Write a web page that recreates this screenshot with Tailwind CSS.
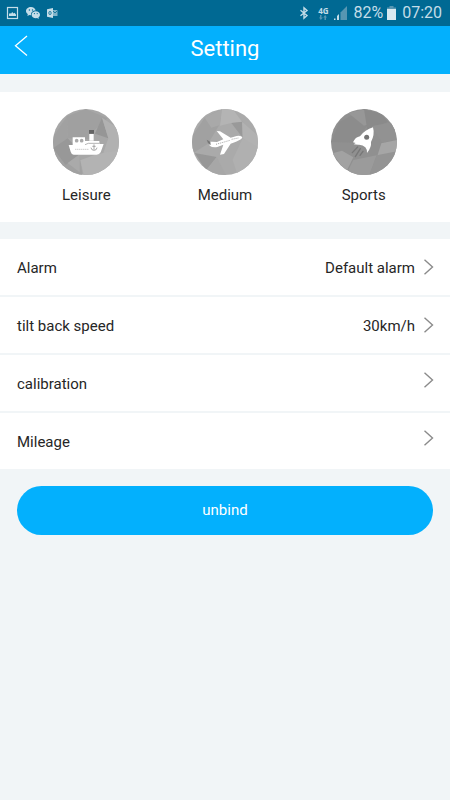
<!DOCTYPE html>
<html lang="en">
<head>
<meta charset="utf-8">
<meta name="viewport" content="width=device-width, initial-scale=1">
<title>Setting</title>
<script src="https://cdn.jsdelivr.net/npm/@tailwindcss/browser@4"></script>
</head>
<body class="min-h-screen bg-[#f1f5f7] font-['Roboto','Liberation_Sans',sans-serif] text-[15px] text-[#262626]">
<div class="flex h-[26px] items-center justify-between bg-[#006993] pr-2 pl-1.5 text-[#c4dde8]">
  <div class="flex items-center gap-[7px]">
    <svg class="h-[14px] w-[13px]" viewBox="0 0 13 14" fill="none" aria-hidden="true"><rect x="1.5" y="1.5" width="10" height="11" stroke="currentColor" stroke-width="1.2"/><path d="M3 10V8l1-1 1 .7L6.200 6l1.300 1.400L8.500 6.800 10 8.500V10z" fill="currentColor"/></svg>
    <svg class="h-[14px] w-[14px]" viewBox="0 0 14 14" aria-hidden="true"><path d="M5 1C2.200 1 0 2.800 0 5c0 1.300.7 2.400 1.800 3.100L1.400 10l2-1 1.600.2C4.700 6.500 7 4.500 9.700 4.600 9.300 2.500 7.400 1 5 1z" fill="currentColor"/><path d="M9.800 5.200C7.500 5.200 5.600 6.700 5.600 8.700s1.900 3.500 4.200 3.500l1.300-.2 1.700 1-.4-1.600c1-.7 1.600-1.600 1.600-2.700 0-2-1.900-3.500-4.200-3.500z" fill="currentColor"/><g fill="#006993"><circle cx="3.400" cy="4" r=".7"/><circle cx="6.500" cy="4" r=".7"/><circle cx="8.400" cy="7.600" r=".6"/><circle cx="11.200" cy="7.600" r=".6"/></g></svg>
    <svg class="h-[12px] w-[11px]" viewBox="0 0 11 12" fill="none" aria-hidden="true"><path d="M0 2.200 6 1v10L0 9.800z" fill="currentColor"/><path d="M6 3h4.500v6H6z" fill="currentColor" opacity=".65"/><path d="M6 4l2 2 2.500-2.500" stroke="#006993" stroke-width=".8"/><ellipse cx="3" cy="6" rx="1.200" ry="1.600" stroke="#006993" stroke-width=".8"/></svg>
  </div>
  <div class="flex items-center">
    <svg class="mr-2 h-[14px] w-[10px]" viewBox="0 0 10 14" fill="none" stroke="currentColor" stroke-width="1.400" aria-hidden="true"><path d="M1.500 4.200 8 9.500 5 12.200V1.800l3 2.700-6.500 5.300"/></svg>
    <div class="mr-1 flex w-3 flex-col items-center">
      <span class="font-['Noto_Sans'] text-[8px] leading-[8px] font-bold">4G</span>
      <svg class="h-[5px] w-2" viewBox="0 0 8 5" fill="#5796b2" aria-hidden="true"><path d="M1 0h1.500v2.500H4L1.800 5 0 2.500h1zM5.500 5V2.500H4.200L6.200 0 8 2.500H7V5z"/></svg>
    </div>
    <svg class="mr-1.5 h-[14px] w-[14px]" viewBox="0 0 14 14" aria-hidden="true"><path d="M7.500 6.500 14 0v14H7.500z" fill="#5796b2"/><path d="M1 12.500h1.500V14H1zM4 10l2-2v6H4z" fill="#c4dde8"/></svg>
    <span class="mr-1 text-base leading-6">82%</span>
    <svg class="mr-1.5 h-[14px] w-[9px]" viewBox="0 0 9 14" aria-hidden="true"><path d="M2.500 0h4v1.500H9V4H0V1.500h2.500z" fill="#5796b2"/><path d="M0 3h9v11H0z" fill="#d9e9f0"/></svg>
    <span class="text-base leading-6">07:20</span>
  </div>
</div>
<header class="relative h-12 bg-[#03b0fd] text-white">
  <button type="button" aria-label="Back" class="absolute top-2 left-3 h-6 w-5"><svg class="h-6 w-5" viewBox="0 0 20 24" fill="none" stroke="currentColor" stroke-width="1.300" aria-hidden="true"><path d="M15 2 3.500 11.800 15 21.500"/></svg></button>
  <h1 class="h-[34px] overflow-hidden pt-2.5 text-center text-[22px] leading-[26px]">Setting</h1>
</header>
<main class="pt-[18px]">
  <section aria-label="Riding mode" class="grid grid-cols-3 bg-white px-[17px] pt-[17px] pb-[15px]">
    <button type="button" class="flex flex-col items-center gap-2">
      <svg class="size-[66px] rounded-full" viewBox="40 28 198 198" aria-hidden="true"><path d="M40 28h198v198H40z" fill="#a7a7a7"/><path d="M82 50 138 28 204 56 164 92 150 118 84 116z" fill="#a0a0a0"/><path d="M82 50 40 112v114h88l-8-60-42 28 6-78z" fill="#a1a1a1"/><path d="M84 116 40 146l38 50 48-36z" fill="#989898"/><path d="M187 54 166 102 206 116z" fill="#969696"/><path d="M187 54 238 88v68l-50 12 18-52z" fill="#b1b1b1"/><path d="M122 182 170 164l68-12v74H132z" fill="#b3b3b3"/><path d="M84 190 120 164v54z" fill="#aaa"/><path d="M148 91h15v11h-15z" fill="#656565"/><path d="M149 103h13v20h-13zM99 113h37v11h43v9h13l-9 25q-4 7-12 7h-69q-7-1-9-9l-6-20h12z" fill="#fff"/><g fill="#aaa"><circle cx="111" cy="123" r="5.500"/><circle cx="126" cy="123" r="5.500"/></g><path d="M136 135l10-4h32" fill="none" stroke="#a6a6a6" stroke-width="2.500"/><path d="M107 149h40" fill="none" stroke="#a6a6a6" stroke-width="2.500" stroke-dasharray="3 3"/><path d="M163 134v16m-5-10h10m-14 4q1 8 9 8t9-8" fill="none" stroke="#999" stroke-width="2.500"/></svg>
      <span class="leading-6">Leisure</span>
    </button>
    <button type="button" class="flex flex-col items-center gap-2">
      <svg class="size-[66px] rounded-full" viewBox="36 28 198 198" aria-hidden="true"><path d="M36 28h198v198H36z" fill="#aaa"/><path d="M36 110 74 54l52-26-6 44-36 60-48 30z" fill="#a1a1a1"/><path d="M74 54 126 28 120 76 94 84z" fill="#a9a9a9"/><path d="M126 28h32l28 38-32 4-34 8z" fill="#b4b4b4"/><path d="M154 70 188 66v48z" fill="#999"/><path d="M186 66 234 108v48l-46-42z" fill="#b2b2b2"/><path d="M44 160 110 172 78 212z" fill="#979797"/><path d="M110 172 138 226H70z" fill="#a7a7a7"/><path d="M188 116 234 142v54l-62 28-14-44z" fill="#b0b0b0"/><path d="M88 126h9l14 1 19-8-20-25 10 1 32 19 18-5q14-2 17 4-2 7-19 13l-16 6-20 31-12 2 10-30-18 7q-14 3-23-4z" fill="#fff"/><path d="M80 120 91 126 92 137 84 130z" fill="#777"/><path d="M108 134 150 122M155 119l20-4" stroke="#909090" stroke-width="2.500" stroke-dasharray="3 3"/></svg>
      <span class="leading-6">Medium</span>
    </button>
    <button type="button" class="flex flex-col items-center gap-2">
      <svg class="size-[66px] rounded-full" viewBox="37 27 198 198" aria-hidden="true"><path d="M37 27h198v198H37z" fill="#909090"/><path d="M37 126 62 66l74-39 18 38-46 63z" fill="#8c8c8c"/><path d="M88 38 146 27l28 38-38 12z" fill="#979797"/><path d="M136 27 188 42 208 66 146 90z" fill="#8a8a8a"/><path d="M160 78 225 66l10 54-45 8z" fill="#929292"/><path d="M188 130 235 120v40l-59 8z" fill="#a6a6a6"/><path d="M41 160 70 152 104 172 82 216z" fill="#a2a2a2"/><path d="M104 180 174 166l-22 59H82z" fill="#9b9b9b"/><path d="M174 166 235 154v71h-83z" fill="#949494"/><path d="M163 82q6 22-6 44 2 16-12 33 1-10-5-17-8-9-21-8l-14-1 6-4-8-2q7-16 21-18 15-20 39-27z" fill="#fff"/><circle cx="144" cy="112" r="7.500" fill="#757575"/><path d="M117 141 101 158M125 146 110 170M133 154 124 166" stroke="#777" stroke-width="4" stroke-linecap="round"/></svg>
      <span class="leading-6">Sports</span>
    </button>
  </section>
  <nav aria-label="Settings" class="mt-[17px] flex flex-col gap-0.5 [&_a]:flex [&_a]:h-14 [&_a]:items-center [&_a]:bg-white [&_a]:pr-4 [&_a]:pl-[17px] [&_span]:pt-0.5">
    <a href="#alarm"><span class="flex-1">Alarm</span><span class="mr-2">Default alarm</span><svg class="h-4 w-[11px]" viewBox="0 0 11 16" fill="none" stroke="#8b8b8b" stroke-width="1.400" aria-hidden="true"><path d="M1.500.8 9.500 8l-8 7.200"/></svg></a>
    <a href="#speed"><span class="flex-1">tilt back speed</span><span class="mr-2">30km/h</span><svg class="h-4 w-[11px]" viewBox="0 0 11 16" fill="none" stroke="#8b8b8b" stroke-width="1.400" aria-hidden="true"><path d="M1.500.8 9.500 8l-8 7.200"/></svg></a>
    <a href="#calibration"><span class="flex-1">calibration</span><svg class="mb-1.5 h-4 w-[11px]" viewBox="0 0 11 16" fill="none" stroke="#8b8b8b" stroke-width="1.400" aria-hidden="true"><path d="M1.500.8 9.500 8l-8 7.200"/></svg></a>
    <a href="#mileage"><span class="flex-1">Mileage</span><svg class="mb-1.5 h-4 w-[11px]" viewBox="0 0 11 16" fill="none" stroke="#8b8b8b" stroke-width="1.400" aria-hidden="true"><path d="M1.500.8 9.500 8l-8 7.200"/></svg></a>
  </nav>
  <div class="px-[17px] pt-[17px]">
    <button type="button" class="h-[49px] w-full rounded-full bg-[#03b0fd] text-white">unbind</button>
  </div>
</main>
</body>
</html>
